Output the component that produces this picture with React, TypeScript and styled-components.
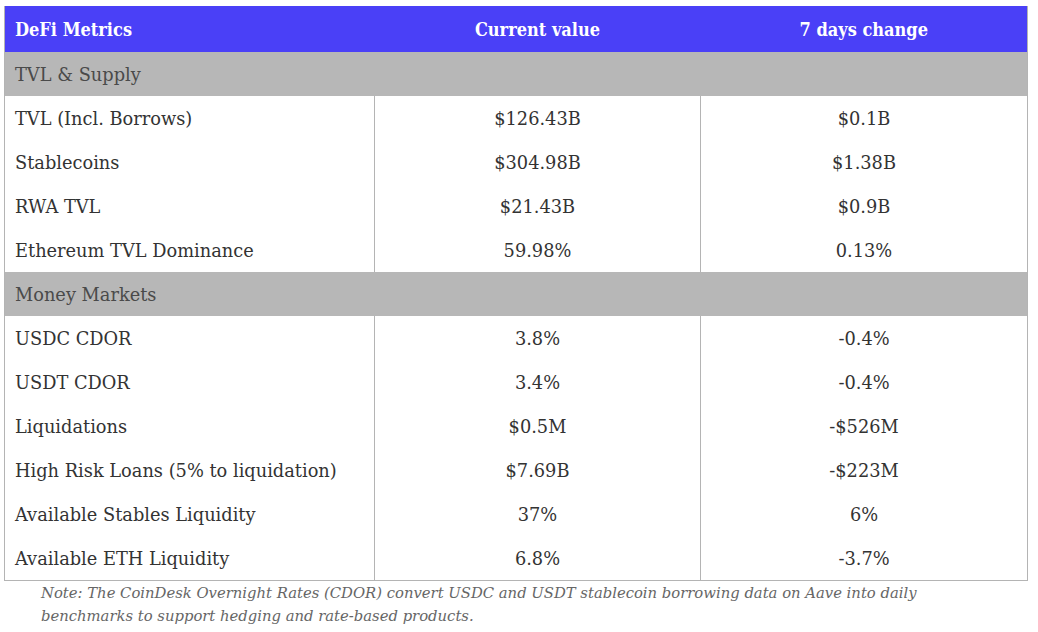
import styled, { createGlobalStyle } from "styled-components";

const GlobalStyle = createGlobalStyle`
  body {
    margin: 0;
    background: #ffffff;
    font-family: "DejaVu Serif", "Liberation Serif", serif;
  }
`;

type Row =
  | { kind: "section"; label: string }
  | { kind: "metric"; label: string; value: string; change: string };

const rows: Row[] = [
  { kind: "section", label: "TVL & Supply" },
  { kind: "metric", label: "TVL (Incl. Borrows)", value: "$126.43B", change: "$0.1B" },
  { kind: "metric", label: "Stablecoins", value: "$304.98B", change: "$1.38B" },
  { kind: "metric", label: "RWA TVL", value: "$21.43B", change: "$0.9B" },
  { kind: "metric", label: "Ethereum TVL Dominance", value: "59.98%", change: "0.13%" },
  { kind: "section", label: "Money Markets" },
  { kind: "metric", label: "USDC CDOR", value: "3.8%", change: "-0.4%" },
  { kind: "metric", label: "USDT CDOR", value: "3.4%", change: "-0.4%" },
  { kind: "metric", label: "Liquidations", value: "$0.5M", change: "-$526M" },
  { kind: "metric", label: "High Risk Loans (5% to liquidation)", value: "$7.69B", change: "-$223M" },
  { kind: "metric", label: "Available Stables Liquidity", value: "37%", change: "6%" },
  { kind: "metric", label: "Available ETH Liquidity", value: "6.8%", change: "-3.7%" },
];

const App = () => {
  return (
    <Page>
      <GlobalStyle />
      <Table>
        <colgroup>
          <col style={{ width: 370 }} />
          <col style={{ width: 326 }} />
          <col style={{ width: 327 }} />
        </colgroup>
        <thead>
          <tr>
            <HeadCell $align="left">DeFi Metrics</HeadCell>
            <HeadCell $align="center">Current value</HeadCell>
            <HeadCell $align="center">7 days change</HeadCell>
          </tr>
        </thead>
        <tbody>
          {rows.map((row) =>
            row.kind === "section" ? (
              <tr key={row.label}>
                <SectionCell colSpan={3}>{row.label}</SectionCell>
              </tr>
            ) : (
              <tr key={row.label}>
                <Cell $align="left">{row.label}</Cell>
                <Cell $align="center">{row.value}</Cell>
                <Cell $align="center">{row.change}</Cell>
              </tr>
            )
          )}
        </tbody>
      </Table>
      <Note>
        Note: The CoinDesk Overnight Rates (CDOR) convert USDC and USDT stablecoin borrowing data on Aave into daily
        <br />
        benchmarks to support hedging and rate-based products.
      </Note>
    </Page>
  );
};

export default App;

const Page = styled.div`
  padding: 6px 0 0 4px;
  width: 1023px;
`;

const Table = styled.table`
  width: 1023px;
  border-collapse: collapse;
  table-layout: fixed;
  border: 1px solid #b4b4b4;
  border-top: none;
`;

const HeadCell = styled.th<{ $align: "left" | "center" }>`
  background: #4a40f7;
  color: #ffffff;
  height: 46px;
  padding: 0 10px;
  font-size: 18px;
  font-weight: 700;
  font-stretch: condensed;
  text-align: ${(p) => p.$align};
  border: none;
`;

const SectionCell = styled.td`
  background: #b7b7b7;
  color: #4a4a4a;
  height: 44px;
  padding: 0 10px;
  font-size: 17.8px;
  border: none;
`;

const Cell = styled.td<{ $align: "left" | "center" }>`
  height: 44px;
  padding: 0 10px;
  font-size: 17.8px;
  color: #333333;
  text-align: ${(p) => p.$align};
  border-left: 1px solid #b4b4b4;
  border-right: 1px solid #b4b4b4;
`;

const Note = styled.p`
  margin: 0 0 0 37px;
  font-size: 14.8px;
  font-style: italic;
  line-height: 23px;
  color: #666666;
  white-space: nowrap;
`;
